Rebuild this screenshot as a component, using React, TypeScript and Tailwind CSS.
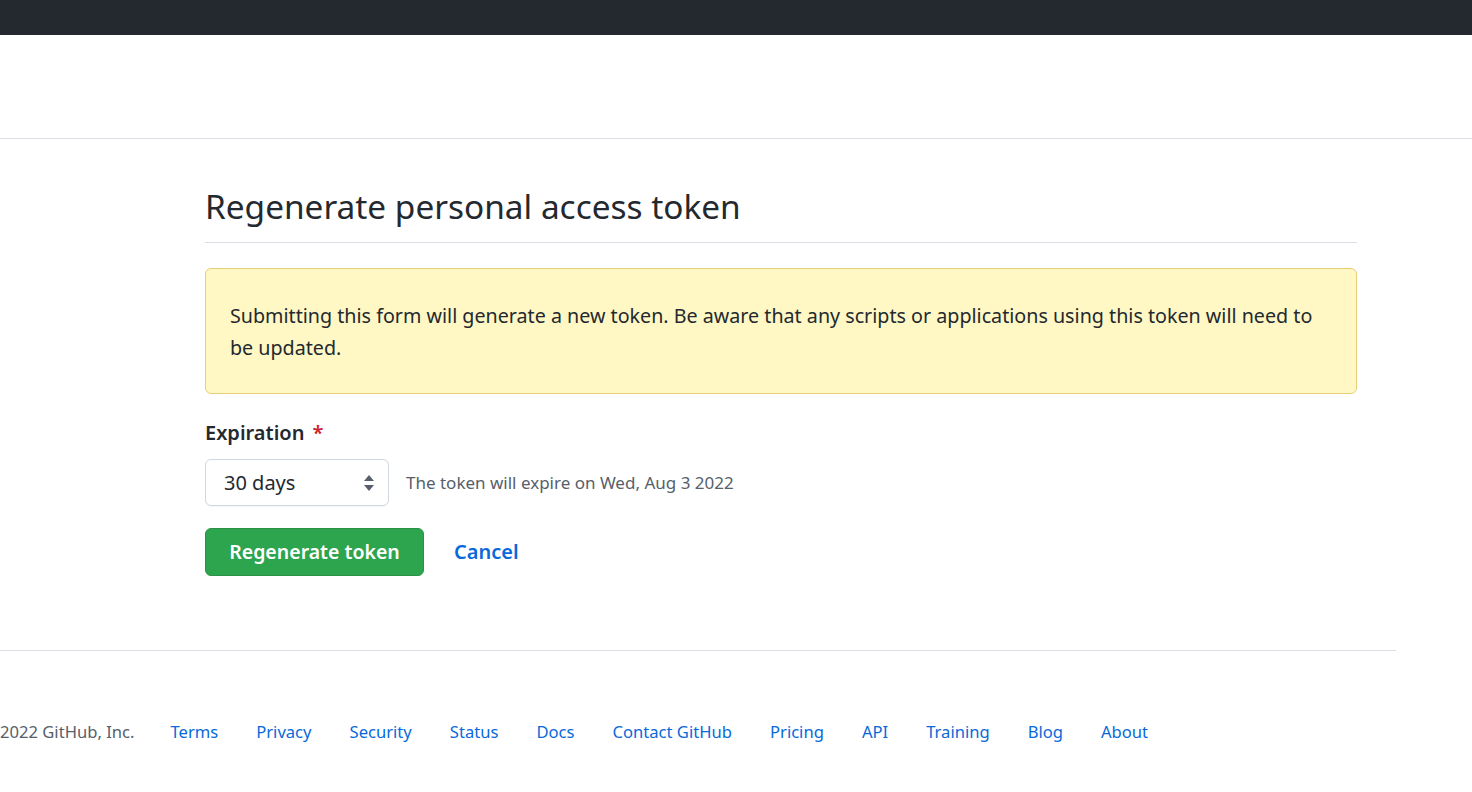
import React from 'react';

const footerLinks = ['Terms', 'Privacy', 'Security', 'Status', 'Docs', 'Contact GitHub', 'Pricing', 'API', 'Training', 'Blog', 'About'];

const SelectArrows: React.FC = () => (
  <svg width="12" height="18" viewBox="0 0 12 18" className="text-[#57606a]">
    <path d="M6 1 L11 7 H1 Z" fill="currentColor" />
    <path d="M6 17 L11 11 H1 Z" fill="currentColor" />
  </svg>
);

export default function App() {
  return (
    <div className="min-h-screen bg-white text-[#24292f] overflow-hidden" style={{ fontFamily: '"Noto Sans", "Open Sans", sans-serif' }}>
      <div className="h-[35px] bg-[#24292f]" />
      <div className="h-[104px] border-b border-[#d8dee4]" />

      <main className="ml-[205px] w-[1152px] pt-[43px]">
        <h1 className="text-[33.4px] leading-[48px] font-normal pb-[12px] border-b border-[#d8dee4]">
          Regenerate personal access token
        </h1>

        <div className="mt-[25px] rounded-[6px] border border-[#e7cf7a] bg-[#fff8c5] px-[24px] pt-[31px] pb-[29px] text-[19.7px] leading-[32px]">
          Submitting this form will generate a new token. Be aware that any scripts or applications using this token will need to be updated.
        </div>

        <div className="mt-[24px]">
          <div className="text-[20px] leading-[30px] font-semibold">
            Expiration <span className="text-[#cf222e] ml-[3px]">*</span>
          </div>
          <div className="mt-[11px] flex items-center">
            <div className="w-[184px] h-[47px] rounded-[6px] border border-[#d0d7de] flex items-center justify-between pl-[18px] pr-[13px] text-[20px] shadow-[0_1px_0_rgba(27,31,36,0.04)]">
              <span>30 days</span>
              <SelectArrows />
            </div>
            <span className="ml-[17px] text-[17px] text-[#57606a]">The token will expire on Wed, Aug 3 2022</span>
          </div>
        </div>

        <div className="mt-[22px] flex items-center">
          <button className="w-[219px] h-[48px] rounded-[6px] bg-[#2da44e] border border-[#2a9147] text-white text-[19.5px] font-semibold">
            Regenerate token
          </button>
          <a className="ml-[30px] text-[20px] font-semibold text-[#0969da]">Cancel</a>
        </div>
      </main>

      <footer className="mt-[74px] w-[1396px] border-t border-[#d8dee4]">
        <div className="flex items-center pt-[69px] text-[16.6px]">
          <span className="text-[#57606a] mr-[-2px]">2022 GitHub, Inc.</span>
          {footerLinks.map((l) => (
            <a key={l} className="ml-[38px] text-[#0969da]">{l}</a>
          ))}
        </div>
      </footer>
    </div>
  );
}
